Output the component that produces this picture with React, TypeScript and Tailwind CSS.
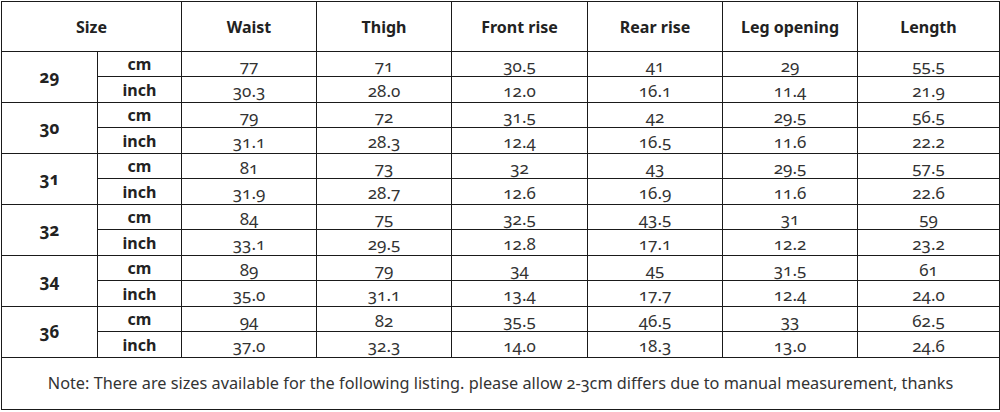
const COLS = ["Waist", "Thigh", "Front rise", "Rear rise", "Leg opening", "Length"];

const SIZES = [
  { size: "29", cm: ["77", "71", "30.5", "41", "29", "55.5"], inch: ["30.3", "28.0", "12.0", "16.1", "11.4", "21.9"] },
  { size: "30", cm: ["79", "72", "31.5", "42", "29.5", "56.5"], inch: ["31.1", "28.3", "12.4", "16.5", "11.6", "22.2"] },
  { size: "31", cm: ["81", "73", "32", "43", "29.5", "57.5"], inch: ["31.9", "28.7", "12.6", "16.9", "11.6", "22.6"] },
  { size: "32", cm: ["84", "75", "32.5", "43.5", "31", "59"], inch: ["33.1", "29.5", "12.8", "17.1", "12.2", "23.2"] },
  { size: "34", cm: ["89", "79", "34", "45", "31.5", "61"], inch: ["35.0", "31.1", "13.4", "17.7", "12.4", "24.0"] },
  { size: "36", cm: ["94", "82", "35.5", "46.5", "33", "62.5"], inch: ["37.0", "32.3", "14.0", "18.3", "13.0", "24.6"] },
];

const cell = "border-[1.5px] border-[#1a1a1a] text-center p-0";

export default function App() {
  return (
    <div className="w-[1000px] h-[412px] bg-white pl-px pt-px font-['Noto_Sans',sans-serif] oldstyle-nums">
      <table className="table-fixed border-collapse w-[998px] text-[#222]">
        <colgroup>
          <col className="w-[96px]" />
          <col className="w-[84px]" />
          <col className="w-[135px]" />
          <col className="w-[135px]" />
          <col className="w-[136px]" />
          <col className="w-[135px]" />
          <col className="w-[135px]" />
          <col className="w-[142px]" />
        </colgroup>
        <thead>
          <tr className="h-[50px]">
            <th colSpan={2} className={`${cell} text-[16px] font-bold`}>Size</th>
            {COLS.map((c) => (
              <th key={c} className={`${cell} text-[16px] font-bold`}>{c}</th>
            ))}
          </tr>
        </thead>
        <tbody>
          {SIZES.map((s) => (
            <>
              <tr key={s.size + "cm"} className="h-[25px]">
                <td rowSpan={2} className={`${cell} text-[17px] font-bold`}>{s.size}</td>
                <td className={`${cell} text-[16px] font-bold leading-none`}>cm</td>
                {s.cm.map((v, i) => (
                  <td key={i} className={`${cell} text-[17px] text-[#333] leading-none pt-[2px]`}>{v}</td>
                ))}
              </tr>
              <tr key={s.size + "in"} className="h-[26px]">
                <td className={`${cell} text-[16px] font-bold leading-none`}>inch</td>
                {s.inch.map((v, i) => (
                  <td key={i} className={`${cell} text-[17px] text-[#333] leading-none pt-[2px]`}>{v}</td>
                ))}
              </tr>
            </>
          ))}
          <tr className="h-[52px]">
            <td colSpan={8} className={`${cell} text-[16.3px] text-[#333]`}>
              Note: There are sizes available for the following listing. please allow 2-3cm differs due to manual measurement, thanks
            </td>
          </tr>
        </tbody>
      </table>
    </div>
  );
}
